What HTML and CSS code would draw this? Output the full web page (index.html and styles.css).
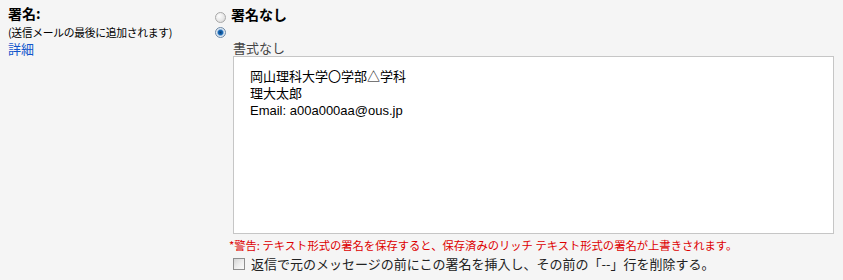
FILE: index.html
```html
<!DOCTYPE html>
<html lang="ja">
<head>
    <meta charset="UTF-8">
    <title>署名</title>
    <link rel="stylesheet" href="styles.css">
</head>
<body>
    <div class="setting-row">
        <div class="setting-label">
            <div class="label-title">署名:</div>
            <div class="label-note">(送信メールの最後に追加されます)</div>
            <a class="label-link" href="#">詳細</a>
        </div>
        <div class="setting-body">
            <label class="radio-line">
                <input type="radio" name="sig" class="radio">
                <span class="radio-title">署名なし</span>
            </label>
            <div class="radio-line radio-top">
                <input type="radio" name="sig" class="radio" checked>
            </div>
            <div class="sig-block">
                <div class="format-label">書式なし</div>
                <div class="sig-box">
                    <div class="sig-text">
                        <div>岡山理科大学〇学部△学科</div>
                        <div>理大太郎</div>
                        <div>Email: a00a000aa@ous.jp</div>
                    </div>
                    <span class="grip"></span>
                </div>
                <div class="warning">*警告: テキスト形式の署名を保存すると、保存済みのリッチ テキスト形式の署名が上書きされます。</div>
                <label class="check-line">
                    <input type="checkbox" class="check">
                    <span>返信で元のメッセージの前にこの署名を挿入し、その前の「--」行を削除する。</span>
                </label>
            </div>
        </div>
    </div>
</body>
</html>
```
FILE: styles.css
```css
body {
    margin: 0;
    background: #f5f5f5;
    font-family: "Noto Sans CJK JP", "Liberation Sans", sans-serif;
    font-size: 13px;
    color: #000;
}
.setting-row {
    display: flex;
    padding: 4px 9px 0 8px;
}
.setting-label {
    width: 206px;
    flex-shrink: 0;
}
.label-title {
    font-weight: bold;
    font-size: 14px;
    line-height: 18px;
}
.label-note {
    font-size: 10.8px;
    line-height: 16px;
    margin-top: 2px;
    letter-spacing: -0.3px;
}
.label-link {
    display: block;
    color: #1155cc;
    text-decoration: none;
    font-size: 13px;
    line-height: 19px;
    margin-top: -1px;
}
.setting-body {
    flex: 1;
}
.radio-line {
    display: flex;
    align-items: center;
    gap: 5px;
    height: 18px;
    margin-top: 4px;
    padding-left: 1px;
}
.radio-top {
    align-items: flex-start;
    height: 12px;
    margin-top: 1px;
}
.radio {
    appearance: none;
    width: 11px;
    height: 11px;
    margin: 0;
    border: 1px solid #a8a8a8;
    border-radius: 50%;
    background: radial-gradient(circle at 35% 35%, #fdfdfd 0%, #e6e6e6 60%, #cfcfcf 100%);
    box-sizing: border-box;
}
.radio:checked {
    border-color: #6e8aa8;
    background: radial-gradient(circle at 50% 50%, #0a3f78 0%, #1c6bb8 35%, #8cb6dd 48%, #e8eef5 60%, #c9d3de 100%);
}
.radio-title {
    font-weight: bold;
    font-size: 14px;
    position: relative;
    top: -3px;
}
.sig-block {
    padding-left: 19px;
}
.format-label {
    color: #444;
    line-height: 17px;
}
.sig-box {
    position: relative;
    height: 176px;
    background: #fff;
    border: 1px solid #c6c6c6;
}
.sig-text {
    padding: 11px 0 0 16px;
    font-family: "Liberation Sans", "Noto Sans CJK JP", sans-serif;
    font-size: 13px;
    line-height: 17px;
    color: #000;
}
.grip {
    position: absolute;
    right: 11px;
    bottom: 10px;
    width: 6px;
    height: 6px;
    background:
        radial-gradient(circle, #aaa 45%, transparent 50%) 4px 0 / 2px 2px no-repeat,
        radial-gradient(circle, #aaa 45%, transparent 50%) 2px 2px / 2px 2px no-repeat,
        radial-gradient(circle, #aaa 45%, transparent 50%) 4px 2px / 2px 2px no-repeat,
        radial-gradient(circle, #aaa 45%, transparent 50%) 0 4px / 2px 2px no-repeat,
        radial-gradient(circle, #aaa 45%, transparent 50%) 2px 4px / 2px 2px no-repeat,
        radial-gradient(circle, #aaa 45%, transparent 50%) 4px 4px / 2px 2px no-repeat;
}
.warning {
    color: #dd0000;
    font-size: 11.3px;
    line-height: 16px;
    margin: 3px 0 0 -4px;
}
.check-line {
    display: flex;
    align-items: center;
    gap: 6px;
    margin-top: 1px;
    font-size: 13px;
    color: #222;
}
.check {
    appearance: none;
    width: 12px;
    height: 12px;
    margin: 0;
    border: 1px solid #8e8e8e;
    background: linear-gradient(135deg, #d4d4d4 0%, #eeeeee 55%, #fafafa 100%);
    box-sizing: border-box;
}
```
